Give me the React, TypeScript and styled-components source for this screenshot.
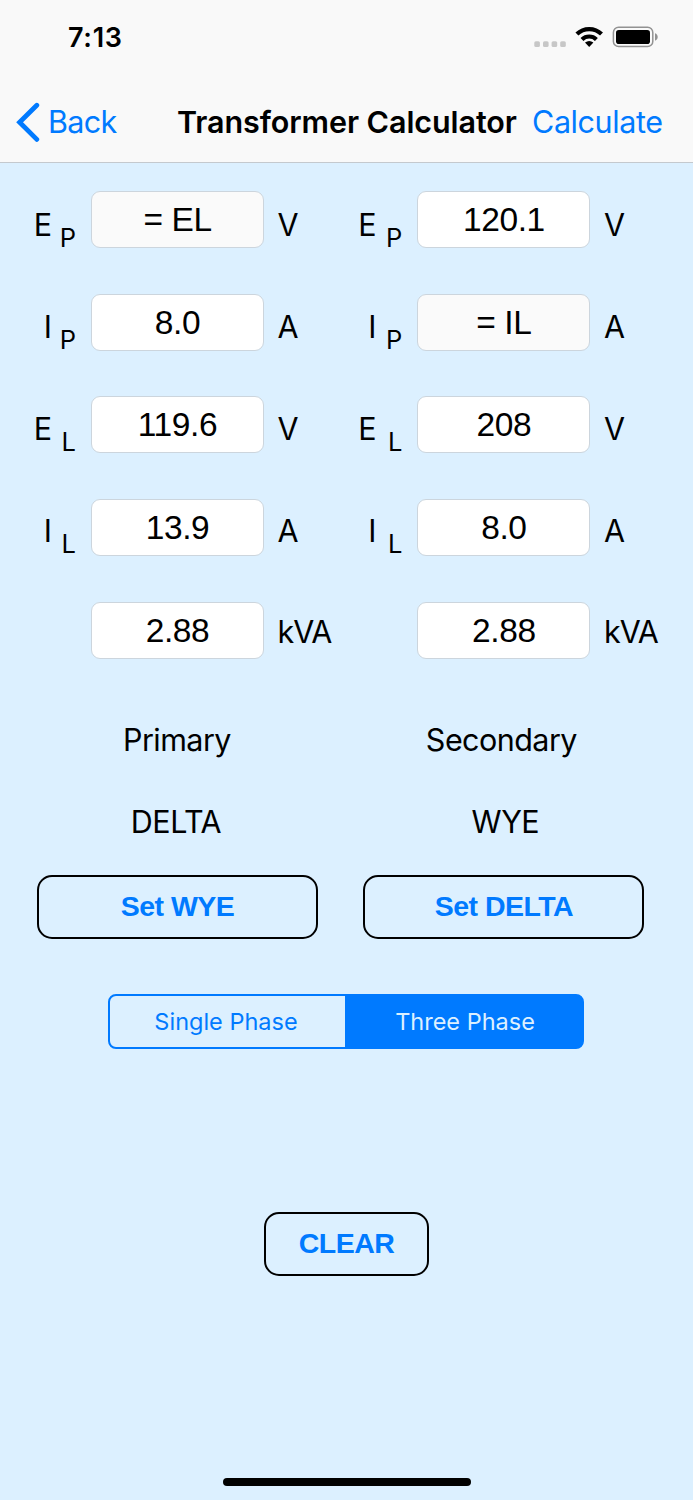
import React from 'react';
import styled, { createGlobalStyle } from 'styled-components';

const BLUE = '#007aff';
const SKY = '#dcf0ff';
const BAR = '#f9f9f9';

const GlobalStyle = createGlobalStyle`
  * { box-sizing: border-box; }
  body { margin: 0; background: ${SKY}; }
  button { appearance: none; background: none; border: 0; padding: 0; margin: 0; font: inherit; color: inherit; cursor: pointer; }
`;

const Screen = styled.div`
  width: 693px;
  height: 1500px;
  display: flex;
  flex-direction: column;
  overflow: hidden;
  background: ${SKY};
  color: #000;
  font-family: Inter, 'Liberation Sans', sans-serif;
`;

const Header = styled.header`
  height: 163px;
  flex: none;
  background: ${BAR};
  border-bottom: 1px solid #c4c9ce;
`;

const StatusBar = styled.div`
  height: 82px;
  display: flex;
  justify-content: space-between;
  padding: 17px 35px 0 68px;
`;

const Clock = styled.span`
  padding-top: 1px;
  font-size: 27px;
  line-height: 40px;
  font-weight: 600;
  letter-spacing: 0.7px;
`;

const StatusIcons = styled.svg`
  width: 124px;
  height: 40px;
`;

const NavBar = styled.nav`
  height: 80px;
  display: flex;
  align-items: center;
  padding-left: 16px;
  line-height: 40px;
  white-space: nowrap;
`;

const NavButton = styled.button<{ $width: number; $spacing: number }>`
  width: ${(p) => p.$width}px;
  display: flex;
  align-items: center;
  color: ${BLUE};
  font-size: 30.5px;
  letter-spacing: ${(p) => p.$spacing}px;
`;

const Chevron = styled.svg`
  width: 24px;
  height: 40px;
  margin-right: 8px;
  flex: none;
`;

const Title = styled.h1`
  width: 355px;
  margin: 0;
  font-size: 30.5px;
  line-height: 40px;
  font-weight: 600;
  letter-spacing: -0.08px;
`;

const Readings = styled.section`
  display: grid;
  grid-template-columns: 326px 367px;
  padding-top: 28.2px;
`;

const Winding = styled.div`
  display: flex;
  flex-direction: column;
  gap: 45.6px;
`;

const Row = styled.div<{ $lead: number; $sub: number }>`
  display: grid;
  grid-template-columns: ${(p) => p.$lead}px ${(p) => p.$sub}px 173px auto;
  height: 57px;
  font-size: 30.5px;
  line-height: 40px;
`;

const Quantity = styled.span<{ $top: number }>`
  padding-top: ${(p) => p.$top}px;
  text-align: right;
`;

const Subscript = styled.span<{ $top: number }>`
  padding: ${(p) => p.$top}px 15px 0 0;
  font-size: 25.5px;
  text-align: right;
`;

const Field = styled.div<{ $locked?: boolean }>`
  height: 57px;
  padding-top: 8px;
  border: 1px solid #ccd5dd;
  border-radius: 9px;
  background: ${(p) => (p.$locked ? '#fafafa' : '#fff')};
  font-family: 'Liberation Sans', Arial, sans-serif;
  font-size: 33.5px;
  letter-spacing: -0.4px;
  text-align: center;
`;

const Unit = styled.span<{ $top: number }>`
  padding: ${(p) => p.$top}px 0 0 13.6px;
  letter-spacing: -1px;
`;

const Sides = styled.section`
  display: grid;
  grid-template-columns: 281px 281px;
  column-gap: 45.4px;
  padding: 61.8px 0 0 37px;
`;

const Side = styled.div`
  display: flex;
  flex-direction: column;
  align-items: center;
`;

const Caption = styled.div<{ $spacing: number; $gap: number; $left?: number; $right?: number }>`
  padding: 0 ${(p) => p.$right || 0}px 0 ${(p) => p.$left || 0}px;
  font-size: 30.5px;
  line-height: 40px;
  letter-spacing: ${(p) => p.$spacing}px;
  margin-bottom: ${(p) => p.$gap}px;
`;

const OutlineButton = styled.button<{ $width: number }>`
  width: ${(p) => p.$width}px;
  height: 64px;
  padding-bottom: 2px;
  border: 2px solid #000;
  border-radius: 15px;
  color: ${BLUE};
  font-family: 'Liberation Sans', Arial, sans-serif;
  font-size: 28.5px;
  line-height: 58px;
  font-weight: 700;
  letter-spacing: -0.5px;
`;

const Segments = styled.div`
  width: 476px;
  height: 55px;
  margin: 55px 0 0 108px;
  display: grid;
  grid-template-columns: 235px 1fr;
  border: 2px solid ${BLUE};
  border-radius: 8px;
  background: linear-gradient(to right, transparent 235px, ${BLUE} 235px);
`;

const Segment = styled.button<{ $active?: boolean }>`
  padding: ${(p) => (p.$active ? '0 0 0 3px' : '0 3px 0 0')};
  color: ${(p) => (p.$active ? SKY : BLUE)};
  font-size: 23.5px;
  line-height: 52px;
`;

const ClearArea = styled.div`
  flex: 1;
  display: flex;
  justify-content: center;
  align-items: flex-start;
  padding-top: 163px;
`;

const HomeIndicator = styled.div`
  width: 248px;
  height: 8px;
  margin: 0 auto 14px;
  border-radius: 4px;
  background: #000;
`;

type Reading = { symbol: string; sub: string; value: string; unit: string; locked?: boolean };

const primary: Reading[] = [
  { symbol: 'E', sub: 'P', value: '= EL', unit: 'V', locked: true },
  { symbol: 'I', sub: 'P', value: '8.0', unit: 'A' },
  { symbol: 'E', sub: 'L', value: '119.6', unit: 'V' },
  { symbol: 'I', sub: 'L', value: '13.9', unit: 'A' },
  { symbol: '', sub: '', value: '2.88', unit: 'kVA' },
];

const secondary: Reading[] = [
  { symbol: 'E', sub: 'P', value: '120.1', unit: 'V' },
  { symbol: 'I', sub: 'P', value: '= IL', unit: 'A', locked: true },
  { symbol: 'E', sub: 'L', value: '208', unit: 'V' },
  { symbol: 'I', sub: 'L', value: '8.0', unit: 'A' },
  { symbol: '', sub: '', value: '2.88', unit: 'kVA' },
];

function WindingReadings({ rows, lead, sub }: { rows: Reading[]; lead: number; sub: number }) {
  return (
    <Winding>
      {rows.map((r, i) => {
        const top = r.sub === 'P' ? 13.5 : r.sub === 'L' ? 12.2 : 10.8;
        return (
          <Row key={i} $lead={lead} $sub={sub}>
            <Quantity $top={top}>{r.symbol}</Quantity>
            <Subscript $top={top + 13}>{r.sub}</Subscript>
            <Field $locked={r.locked}>{r.value}</Field>
            <Unit $top={top}>{r.unit}</Unit>
          </Row>
        );
      })}
    </Winding>
  );
}

export default function App() {
  return (
    <>
      <GlobalStyle />
      <Screen>
        <Header>
          <StatusBar>
            <Clock>7:13</Clock>
            <StatusIcons viewBox="534 17 124 40">
              <g fill="#c7c7c7">
                <rect x="534.3" y="41.2" width="5.6" height="5.8" rx="1.6" />
                <rect x="543" y="41.2" width="5.6" height="5.8" rx="1.6" />
                <rect x="551.6" y="41.2" width="5.6" height="5.8" rx="1.6" />
                <rect x="560.2" y="41.2" width="5.6" height="5.8" rx="1.6" />
              </g>
              <g fill="none" stroke="#000" strokeWidth="4.2">
                <path d="M576.9 34.1A17.6 17.6 0 0 1 601.5 34.1" />
                <path d="M582 39.4A10.4 10.4 0 0 1 596.4 39.4" />
              </g>
              <path d="M585 42.6Q589.2 39.3 593.4 42.6L589.2 46.9Z" />
              <rect x="613.4" y="27.3" width="39.4" height="19.3" rx="5.2" fill="none" stroke="#929292" strokeWidth="1.5" />
              <rect x="616" y="30" width="34" height="14" rx="2.8" />
              <path d="M655 33.3C658.6 34.5 658.6 39.5 655 40.7Z" fill="#929292" />
            </StatusIcons>
          </StatusBar>
          <NavBar>
            <NavButton $width={161} $spacing={-0.7}>
              <Chevron viewBox="0 0 24 40">
                <path d="M20.8 3.2L3.6 20.3L20.8 37.4" fill="none" stroke={BLUE} strokeWidth="4.8" strokeLinecap="round" strokeLinejoin="miter" />
              </Chevron>
              Back
            </NavButton>
            <Title>Transformer Calculator</Title>
            <NavButton $width={132} $spacing={-0.4}>Calculate</NavButton>
          </NavBar>
        </Header>
        <Readings>
          <WindingReadings rows={primary} lead={52} sub={39} />
          <WindingReadings rows={secondary} lead={50.5} sub={40.9} />
        </Readings>
        <Sides>
          <Side>
            <Caption $spacing={-0.55} $gap={42} $right={1}>Primary</Caption>
            <Caption $spacing={-0.5} $gap={33} $right={3}>DELTA</Caption>
            <OutlineButton $width={281}>Set WYE</OutlineButton>
          </Side>
          <Side>
            <Caption $spacing={-0.55} $gap={42} $right={5}>Secondary</Caption>
            <Caption $spacing={-0.5} $gap={33} $left={3}>WYE</Caption>
            <OutlineButton $width={281}>Set DELTA</OutlineButton>
          </Side>
        </Sides>
        <Segments>
          <Segment>Single Phase</Segment>
          <Segment $active>Three Phase</Segment>
        </Segments>
        <ClearArea>
          <OutlineButton $width={165}>CLEAR</OutlineButton>
        </ClearArea>
        <HomeIndicator />
      </Screen>
    </>
  );
}
